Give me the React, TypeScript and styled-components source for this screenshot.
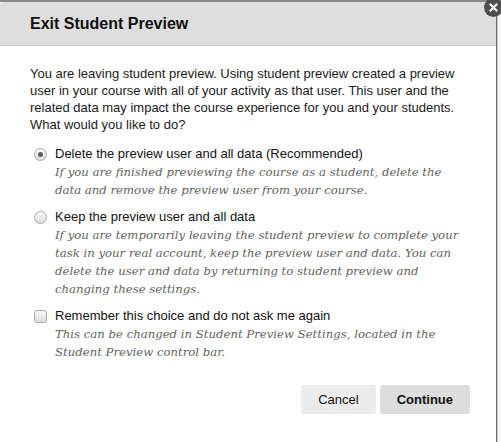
import React, { useState } from "react";
import styled, { createGlobalStyle } from "styled-components";

const GlobalStyle = createGlobalStyle`
  html, body {
    margin: 0;
    padding: 0;
    background: #ffffff;
  }
  body {
    font-family: "Liberation Sans", Arial, sans-serif;
  }
`;

const Page = styled.div`
  width: 501px;
  height: 442px;
  overflow: hidden;
  background: linear-gradient(#8a8a8a 0 2px, #ffffff 2px);
  padding-top: 2px;
  box-sizing: border-box;
`;

const Dialog = styled.div`
  position: relative;
  width: 496px;
  height: 440px;
  background: #fff;
  border-radius: 3px 3px 0 0;
  box-shadow: 1px 0 0 #6a6a6a, 2px 1px 2px rgba(0, 0, 0, 0.25);
  display: flex;
  flex-direction: column;
`;

const Header = styled.div`
  height: 43px;
  background: #dedede;
  border-bottom: 1px solid #c8c8c8;
  border-radius: 3px 3px 0 0;
  display: flex;
  align-items: center;
  padding: 0 30px;
`;

const Title = styled.h1`
  margin: 0;
  font-size: 16px;
  font-weight: bold;
  color: #111;
`;

const CloseButton = styled.button`
  position: absolute;
  top: -4px;
  right: -7px;
  width: 19px;
  height: 19px;
  border-radius: 50%;
  border: none;
  padding: 0;
  background: #4f4f4f;
  display: flex;
  align-items: center;
  justify-content: center;
  cursor: pointer;
`;

const Body = styled.div`
  padding: 19px 30px 0 30px;
  display: flex;
  flex-direction: column;
`;

const Intro = styled.p`
  margin: 0 0 13px 0;
  font-size: 13px;
  line-height: 17px;
  color: #1a1a1a;
`;

const Option = styled.label<{ $gap: number }>`
  display: grid;
  grid-template-columns: 25px 1fr;
  margin-bottom: ${(p) => p.$gap}px;
  cursor: pointer;
`;

const Control = styled.span<{ $square?: boolean }>`
  width: 11px;
  height: 11px;
  margin: 2px 0 0 4px;
  border: 1px solid #a9a9a9;
  border-radius: ${(p) => (p.$square ? "3px" : "50%")};
  background: linear-gradient(#fafafa, #dcdcdc);
  display: flex;
  align-items: center;
  justify-content: center;
`;

const Dot = styled.span`
  width: 5px;
  height: 5px;
  border-radius: 50%;
  background: #5a5a5a;
`;

const OptionText = styled.div`
  display: flex;
  flex-direction: column;
`;

const OptionLabel = styled.span`
  font-size: 13px;
  line-height: 16px;
  color: #111;
`;

const Hint = styled.span`
  display: flex;
  flex-direction: column;
  font-family: "DejaVu Serif", "Liberation Serif", serif;
  font-style: italic;
  font-size: 11.7px;
  line-height: 18px;
  color: #626262;
  padding-top: 1px;
`;

const HintLine = styled.span`
  white-space: nowrap;
`;

const Footer = styled.div`
  display: flex;
  justify-content: flex-end;
  gap: 4px;
  padding: 24px 26px 0 0;
`;

const Button = styled.button<{ $primary?: boolean }>`
  height: 29px;
  padding: 0 17px;
  border: none;
  border-radius: 3px;
  font-family: "Liberation Sans", Arial, sans-serif;
  font-size: 13px;
  font-weight: ${(p) => (p.$primary ? "bold" : "normal")};
  color: #111;
  background: ${(p) => (p.$primary ? "#dddddd" : "#ececec")};
  cursor: pointer;
`;

const options = [
  {
    label: "Delete the preview user and all data (Recommended)",
    hint: [
      "If you are finished previewing the course as a student, delete the",
      "data and remove the preview user from your course.",
    ],
  },
  {
    label: "Keep the preview user and all data",
    hint: [
      "If you are temporarily leaving the student preview to complete your",
      "task in your real account, keep the preview user and data. You can",
      "delete the user and data by returning to student preview and",
      "changing these settings.",
    ],
  },
];

const rememberHint = [
  "This can be changed in Student Preview Settings, located in the",
  "Student Preview control bar.",
];

export default function App() {
  const [choice, setChoice] = useState(0);
  const [remember, setRemember] = useState(false);

  return (
    <Page>
      <GlobalStyle />
      <Dialog>
        <Header>
          <Title>Exit Student Preview</Title>
        </Header>
        <CloseButton aria-label="Close">
          <svg width="9" height="9" viewBox="0 0 9 9">
            <path d="M1.5 1.5 L7.5 7.5 M7.5 1.5 L1.5 7.5" stroke="#fff" strokeWidth="2.2" strokeLinecap="round" />
          </svg>
        </CloseButton>
        <Body>
          <Intro>
            You are leaving student preview. Using student preview created a preview user in your
            course with all of your activity as that user. This user and the related data may impact
            the course experience for you and your students. What would you like to do?
          </Intro>
          {options.map((o, i) => (
            <Option key={i} $gap={10} onClick={() => setChoice(i)}>
              <Control>{choice === i && <Dot />}</Control>
              <OptionText>
                <OptionLabel>{o.label}</OptionLabel>
                <Hint>
                  {o.hint.map((line) => (
                    <HintLine key={line}>{line}</HintLine>
                  ))}
                </Hint>
              </OptionText>
            </Option>
          ))}
          <Option $gap={0} onClick={() => setRemember(!remember)}>
            <Control $square>{remember && <Dot />}</Control>
            <OptionText>
              <OptionLabel>Remember this choice and do not ask me again</OptionLabel>
              <Hint>
                {rememberHint.map((line) => (
                  <HintLine key={line}>{line}</HintLine>
                ))}
              </Hint>
            </OptionText>
          </Option>
        </Body>
        <Footer>
          <Button>Cancel</Button>
          <Button $primary>Continue</Button>
        </Footer>
      </Dialog>
    </Page>
  );
}
